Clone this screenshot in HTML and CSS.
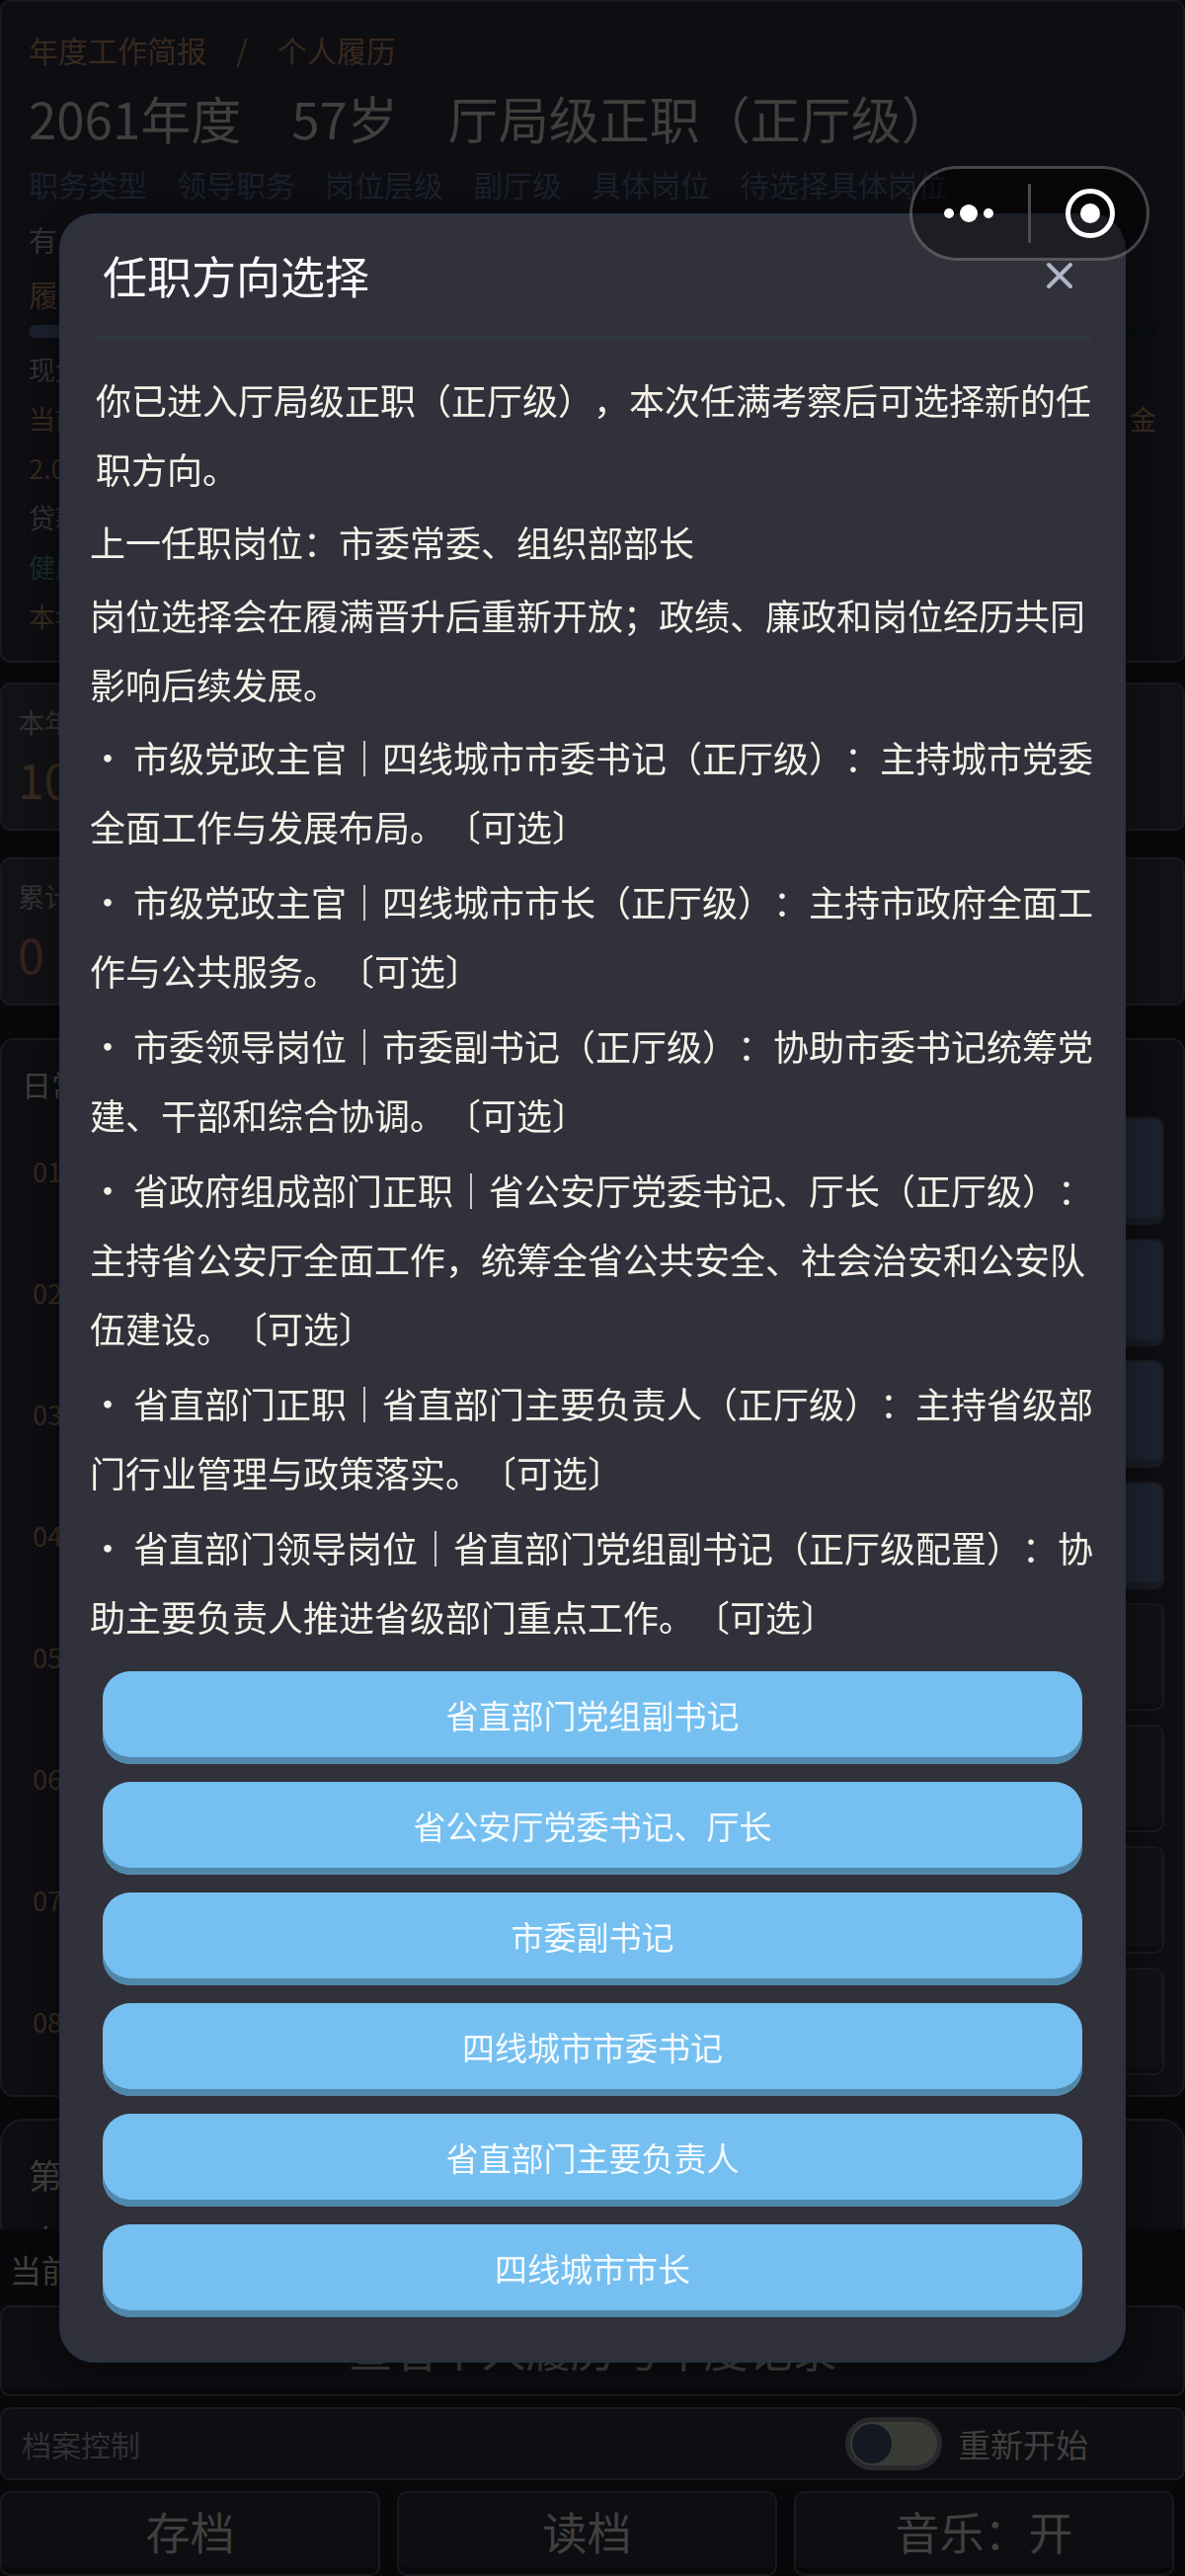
FILE: index.html
```html
<!DOCTYPE html>
<html lang="zh-CN">
<head>
    <meta charset="UTF-8">
    <meta name="viewport" content="width=device-width, initial-scale=1.0">
    <title>年度工作简报</title>
    <link rel="stylesheet" href="styles.css">
</head>
<body>
    <main>
        <section class="card profile">
            <p class="tagline">年度工作简报　/　个人履历</p>
            <h1>2061年度　57岁　厅局级正职（正厅级）</h1>
            <p class="post">职务类型　领导职务　岗位层级　副厅级　具体岗位　待选择具体岗位</p>
            <p class="note">有</p>
            <p class="progress-label">履</p>
            <div class="progress"><div class="progress-fill"></div></div>
            <p class="line">现金</p>
            <p class="line gold"><span>当前</span><span>金</span></p>
            <p class="line gold">2.0</p>
            <p class="line">贷款</p>
            <p class="line green">健康</p>
            <p class="line gold">本年</p>
        </section>
        <section class="card stat">
            <p class="stat-label">本年</p>
            <p class="stat-value">10</p>
        </section>
        <section class="card stat">
            <p class="stat-label">累计</p>
            <p class="stat-value red">0</p>
        </section>
        <section class="card daily">
            <h2>日常</h2>
            <ol>
                <li><span>01</span><button class="action active" aria-label="01"></button></li>
                <li><span>02</span><button class="action active" aria-label="02"></button></li>
                <li><span>03</span><button class="action active" aria-label="03"></button></li>
                <li><span>04</span><button class="action active" aria-label="04"></button></li>
                <li><span>05</span><button class="action" aria-label="05"></button></li>
                <li><span>06</span><button class="action" aria-label="06"></button></li>
                <li><span>07</span><button class="action" aria-label="07"></button></li>
                <li><span>08</span><button class="action" aria-label="08"></button></li>
            </ol>
        </section>
        <section class="card log">
            <p>第</p>
            <p>小</p>
        </section>
    </main>

    <footer>
        <p class="current">当前</p>
        <button class="dark-button history">查看个人履历与年度记录</button>
        <div class="card archive">
            <span class="archive-title">档案控制</span>
            <input type="checkbox" id="restart">
            <label for="restart">重新开始</label>
        </div>
        <div class="archive-buttons">
            <button class="dark-button">存档</button>
            <button class="dark-button">读档</button>
            <button class="dark-button">音乐：开</button>
        </div>
    </footer>

    <!-- Position choice modal -->
    <div class="modal">
        <div class="modal-content">
            <div class="modal-header">
                <h2>任职方向选择</h2>
                <button class="close" aria-label="关闭">
                    <svg width="28" height="28" viewBox="0 0 28 28"><path d="M3 3L25 25M25 3L3 25" stroke="#b0b6c8" stroke-width="4" stroke-linecap="round"/></svg>
                </button>
            </div>
            <div class="modal-body">
                <p class="intro">你已进入厅局级正职（正厅级），本次任满考察后可选择新的任职方向。</p>
                <p>上一任职岗位：市委常委、组织部部长</p>
                <p>岗位选择会在履满晋升后重新开放；政绩、廉政和岗位经历共同影响后续发展。</p>
                <div class="options">
                    <p>・ 市级党政主官｜四线城市市委书记（正厅级）：主持城市党委全面工作与发展布局。〔可选〕</p>
                    <p>・ 市级党政主官｜四线城市市长（正厅级）：主持市政府全面工作与公共服务。〔可选〕</p>
                    <p>・ 市委领导岗位｜市委副书记（正厅级）：协助市委书记统筹党建、干部和综合协调。〔可选〕</p>
                    <p>・ 省政府组成部门正职｜省公安厅党委书记、厅长（正厅级）：主持省公安厅全面工作，统筹全省公共安全、社会治安和公安队伍建设。〔可选〕</p>
                    <p>・ 省直部门正职｜省直部门主要负责人（正厅级）：主持省级部门行业管理与政策落实。〔可选〕</p>
                    <p>・ 省直部门领导岗位｜省直部门党组副书记（正厅级配置）：协助主要负责人推进省级部门重点工作。〔可选〕</p>
                </div>
                <div class="choices">
                    <button>省直部门党组副书记</button>
                    <button>省公安厅党委书记、厅长</button>
                    <button>市委副书记</button>
                    <button>四线城市市委书记</button>
                    <button>省直部门主要负责人</button>
                    <button>四线城市市长</button>
                </div>
            </div>
        </div>
    </div>

    <!-- Mini program menu -->
    <div class="capsule">
        <button aria-label="更多">
            <svg width="52" height="52" viewBox="0 0 52 52" fill="#fff"><circle cx="6" cy="26" r="5"/><circle cx="26" cy="26" r="9"/><circle cx="46" cy="26" r="5"/></svg>
        </button>
        <span class="capsule-line"></span>
        <button aria-label="退出">
            <svg width="52" height="52" viewBox="0 0 52 52"><circle cx="26" cy="26" r="22.5" fill="none" stroke="#fff" stroke-width="5"/><circle cx="26" cy="26" r="10" fill="#fff"/></svg>
        </button>
    </div>
</body>
</html>
```
FILE: styles.css
```css
* {
    box-sizing: border-box;
}
body {
    font-family: "Noto Sans CJK SC", sans-serif;
    margin: 0;
    height: 100vh;
    display: flex;
    flex-direction: column;
    background-color: #08080a;
    color: #323133;
    text-spacing-trim: space-all;
}
h1, h2, p, ol {
    margin: 0;
    padding: 0;
    font-weight: normal;
}
button {
    font-family: inherit;
    border: none;
    padding: 0;
    cursor: pointer;
}
main {
    flex: 1;
    min-height: 0;
    overflow: hidden;
}
.card {
    background-color: #0d0d12;
    border: 2px solid #1a1a1e;
    border-radius: 10px;
}
.profile {
    padding: 20px 27px;
    margin-bottom: 20px;
}
.tagline {
    font-size: 30px;
    line-height: 56px;
    color: #38291f;
}
h1 {
    font-size: 51px;
    line-height: 82px;
    color: #413f3d;
}
.post {
    font-size: 30px;
    line-height: 52px;
    color: #1a202c;
}
.note {
    font-size: 29px;
    line-height: 60px;
}
.progress-label {
    font-size: 30px;
    line-height: 50px;
    color: #38291f;
}
.progress {
    height: 13px;
    margin: 7px 0;
    border-radius: 7px;
    background-color: #090d11;
}
.progress-fill {
    width: 50%;
    height: 100%;
    border-radius: 7px;
    background-color: #1b212d;
}
.line {
    display: flex;
    justify-content: space-between;
    font-size: 27px;
    line-height: 50px;
}
.gold {
    color: #38291f;
}
.green {
    color: #1a2a25;
}
.stat {
    padding: 16px;
    margin-bottom: 27px;
    background-color: #121216;
}
.stat-label {
    font-size: 27px;
    line-height: 44px;
}
.stat-value {
    font-size: 48px;
    line-height: 70px;
    color: #38291f;
}
.stat-value.red {
    color: #381f20;
}
.daily {
    margin: 33px 0 22px;
    padding: 14px 19px 20px 20px;
    border-radius: 14px;
}
.daily h2 {
    font-size: 30px;
    line-height: 60px;
    margin-bottom: 4px;
    color: #413f3d;
}
.daily ol {
    list-style: none;
    display: flex;
    flex-direction: column;
    gap: 14px;
}
.daily li {
    display: flex;
    align-items: center;
    gap: 24px;
    padding-left: 11px;
    font-size: 27px;
    color: #38291f;
}
.action {
    flex: 1;
    height: 109px;
    border: 2px solid #1a1a1e;
    border-radius: 10px;
    background-color: #121216;
    box-shadow: inset 0 -5px #0d0d11;
}
.action.active {
    background-color: #1b212d;
    box-shadow: inset 0 -5px #151a23;
}
.log {
    padding: 22px 27px;
    border-radius: 24px;
    font-size: 34px;
    line-height: 66px;
    color: #413f3d;
}

/* Bottom bar */
footer {
    display: flex;
    flex-direction: column;
    gap: 11px;
    background-color: #08080a;
}
.current {
    padding: 14px 10px 0;
    font-size: 32px;
    line-height: 52px;
    color: #413f3d;
}
.dark-button {
    height: 86px;
    padding-bottom: 5px;
    border: 2px solid #1a1a1e;
    border-radius: 10px;
    background-color: #0d0d12;
    box-shadow: inset 0 -6px #09090c;
    color: #413f3d;
    font-size: 45px;
}
.history {
    height: 92px;
}
.archive {
    display: flex;
    align-items: center;
    height: 74px;
    padding: 0 96px 0 20px;
}
.archive-title {
    margin-right: auto;
    font-size: 30px;
}
.archive input {
    appearance: none;
    display: flex;
    align-items: center;
    width: 98px;
    height: 54px;
    margin: 0 16px 0 0;
    padding: 0 2px;
    border: 5px solid #28282c;
    border-radius: 27px;
    background-color: #393b36;
}
.archive input::before {
    content: "";
    width: 40px;
    height: 40px;
    border-radius: 50%;
    background-color: #141822;
}
.archive input:checked {
    justify-content: flex-end;
}
.archive label {
    font-size: 33px;
    color: #413f3d;
}
.archive-buttons {
    display: grid;
    grid-template-columns: repeat(3, 1fr);
    gap: 17px;
    padding-right: 11px;
}

/* Modal Styles */
.modal {
    position: fixed;
    top: 0;
    left: 0;
    width: 100%;
    height: 100%;
    display: flex;
    justify-content: center;
    align-items: center;
}
.modal-content {
    width: 90%;
    border: 3px solid #29323e;
    border-radius: 36px;
    background-color: #31313b;
    box-shadow: 0 6px 30px rgba(0, 0, 0, 0.4);
}
.modal-header {
    display: flex;
    justify-content: space-between;
    align-items: center;
    margin: 0 33px;
    padding: 20px 17px 22px 8px;
    border-bottom: 4px solid #303944;
}
.modal-header h2 {
    font-size: 45px;
    line-height: 79px;
    color: #fafaff;
}
.close {
    display: flex;
    background: none;
}
.modal-body {
    padding: 25px 28px 43px;
    font-size: 36px;
    line-height: 70px;
    color: #f5f1e8;
}
.modal-body p {
    margin-bottom: 4px;
}
.modal-body .intro {
    padding: 0 4px 0 6px;
}
.options {
    display: flex;
    flex-direction: column;
    gap: 6px;
}
.modal-body .options p {
    margin: 0;
}
.choices {
    display: flex;
    flex-direction: column;
    gap: 18px;
    margin: 21px 13px 0;
}
.choices button {
    height: 94px;
    padding-bottom: 7px;
    border-radius: 28px;
    background-color: #75c0f1;
    box-shadow: inset 0 -7px #5088ab;
    color: #f4faff;
    font-size: 33px;
}

.capsule {
    position: fixed;
    top: 168px;
    right: 36px;
    display: flex;
    align-items: center;
    gap: 34px;
    height: 96px;
    padding: 0 31px;
    border: 3px solid rgba(255, 255, 255, 0.25);
    border-radius: 48px;
    background-color: rgba(0, 0, 0, 0.4);
}
.capsule button {
    display: flex;
    background: none;
}
.capsule-line {
    width: 3px;
    height: 60px;
    background-color: #4b4b4e;
}
```
